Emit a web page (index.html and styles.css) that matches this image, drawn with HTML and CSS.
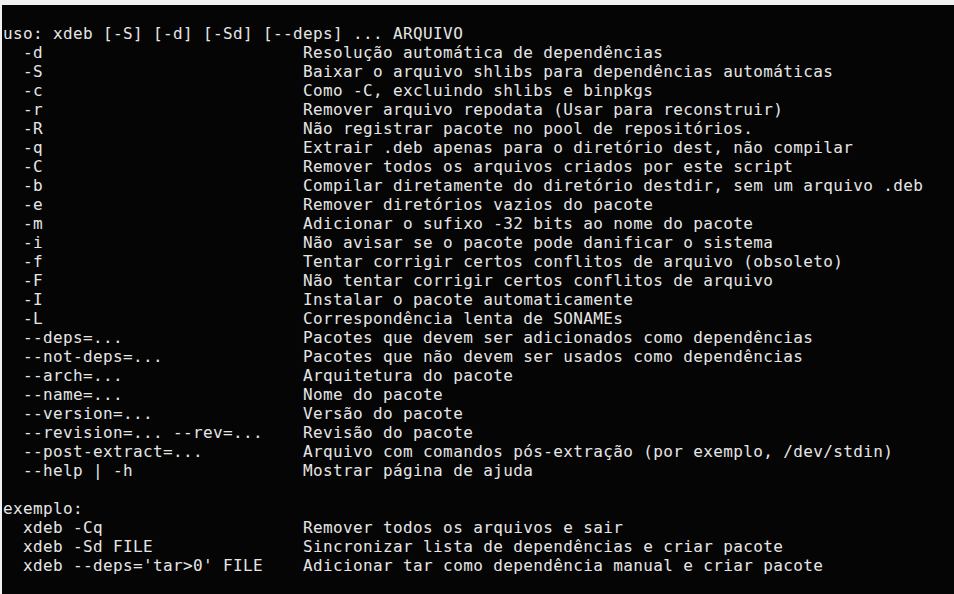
FILE: index.html
```html
<!DOCTYPE html>
<html lang="pt">
<head>
<meta charset="utf-8">
<title>xdeb</title>
<link rel="stylesheet" href="styles.css">
</head>
<body>
<main class="terminal">
<pre class="output">
uso: xdeb [-S] [-d] [-Sd] [--deps] ... ARQUIVO
  -d                          Resolução automática de dependências
  -S                          Baixar o arquivo shlibs para dependências automáticas
  -c                          Como -C, excluindo shlibs e binpkgs
  -r                          Remover arquivo repodata (Usar para reconstruir)
  -R                          Não registrar pacote no pool de repositórios.
  -q                          Extrair .deb apenas para o diretório dest, não compilar
  -C                          Remover todos os arquivos criados por este script
  -b                          Compilar diretamente do diretório destdir, sem um arquivo .deb
  -e                          Remover diretórios vazios do pacote
  -m                          Adicionar o sufixo -32 bits ao nome do pacote
  -i                          Não avisar se o pacote pode danificar o sistema
  -f                          Tentar corrigir certos conflitos de arquivo (obsoleto)
  -F                          Não tentar corrigir certos conflitos de arquivo
  -I                          Instalar o pacote automaticamente
  -L                          Correspondência lenta de SONAMEs
  --deps=...                  Pacotes que devem ser adicionados como dependências
  --not-deps=...              Pacotes que não devem ser usados como dependências
  --arch=...                  Arquitetura do pacote
  --name=...                  Nome do pacote
  --version=...               Versão do pacote
  --revision=... --rev=...    Revisão do pacote
  --post-extract=...          Arquivo com comandos pós-extração (por exemplo, /dev/stdin)
  --help | -h                 Mostrar página de ajuda

exemplo:
  xdeb -Cq                    Remover todos os arquivos e sair
  xdeb -Sd FILE               Sincronizar lista de dependências e criar pacote
  xdeb --deps='tar&gt;0' FILE    Adicionar tar como dependência manual e criar pacote
</pre>
</main>
</body>
</html>
```
FILE: styles.css
```css
html, body {
  margin: 0;
  padding: 0;
  height: 100%;
}
body {
  background: #f2f1ef;
  padding: 5px 0 0 2px;
  box-sizing: border-box;
  overflow: hidden;
}
.terminal {
  background: #050505;
  height: 100%;
  padding: 19px 0 0 1px;
  box-sizing: border-box;
}
.output {
  margin: 0;
  font-family: "DejaVu Sans Mono", monospace;
  font-size: 16px;
  line-height: 19px;
  letter-spacing: 0.37px;
  color: #e6e6e6;
}
```
